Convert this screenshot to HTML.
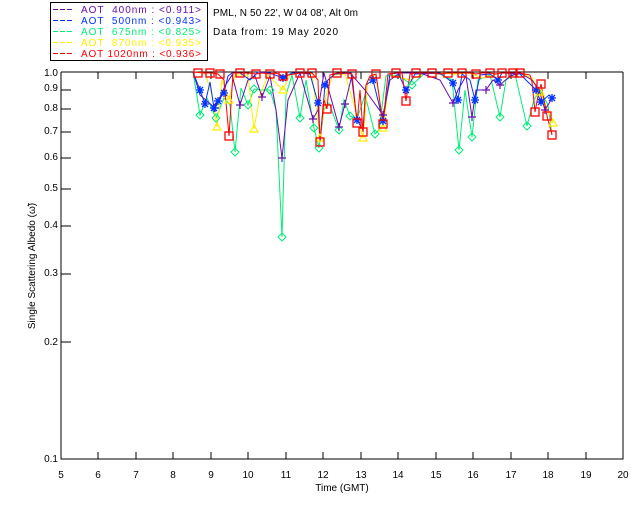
<!DOCTYPE html>
<html><head><style>
body{margin:0;background:#fff;width:640px;height:512px;overflow:hidden;font-family:"Liberation Sans",sans-serif}
svg text{font-family:"Liberation Sans",sans-serif;font-size:10px}
</style></head><body>
<svg width="640" height="512" xmlns="http://www.w3.org/2000/svg">
<defs>
<g id="sq"><rect x="-4" y="-4" width="8" height="8" fill="none" stroke="#f00" stroke-width="1.3"/></g>
<g id="ast"><path d="M-4 0H4M0-4V4M-3-3L3 3M-3 3L3-3" stroke="#0033ff" stroke-width="1.3"/></g>
<g id="cr"><path d="M-4 0H4M0-4V4" stroke="#6a0dad" stroke-width="1.2"/></g>
<g id="dm"><path d="M0-4L4 0L0 4L-4 0Z" fill="none" stroke="#00ee77" stroke-width="1"/></g>
<g id="tr"><path d="M0-4L4 3H-4Z" fill="none" stroke="#ffee00" stroke-width="1.2"/></g>
</defs>
<!-- legend -->
<rect x="50.5" y="2.5" width="157" height="58" fill="#fff" stroke="#000"/>
<g stroke-width="1">
<path d="M53 9.5h20" stroke="#6a0dad" stroke-dasharray="5,2"/>
<path d="M53 20.5h20" stroke="#0033ff" stroke-dasharray="5,2"/>
<path d="M53 31.5h20" stroke="#00ee77" stroke-dasharray="5,2"/>
<path d="M53 42.5h20" stroke="#ffee00" stroke-dasharray="5,2"/>
<path d="M53 53.5h20" stroke="#f00" stroke-dasharray="5,2"/>
</g>
<g font-size="10.5">
<text x="81" y="13" fill="#6a0dad" textLength="120" lengthAdjust="spacing">AOT&#160;&#160;400nm : &lt;0.911&gt;</text>
<text x="81" y="24" fill="#0033ff" textLength="120" lengthAdjust="spacing">AOT&#160;&#160;500nm : &lt;0.943&gt;</text>
<text x="81" y="35" fill="#00ee77" textLength="120" lengthAdjust="spacing">AOT&#160;&#160;675nm : &lt;0.825&gt;</text>
<text x="81" y="46" fill="#ffee00" textLength="120" lengthAdjust="spacing">AOT&#160;&#160;870nm : &lt;0.935&gt;</text>
<text x="81" y="57" fill="#f00" textLength="120" lengthAdjust="spacing">AOT 1020nm : &lt;0.936&gt;</text>
</g>
<text x="213" y="16" textLength="145" lengthAdjust="spacing">PML, N 50 22', W 04 08', Alt 0m</text>
<text x="213" y="35" textLength="125" lengthAdjust="spacing">Data from: 19 May 2020</text>
<!-- axes -->
<path d="M61 72V459H623V72M61 72H623" fill="none" stroke="#000"/>
<g stroke="#000">
<path d="M98 459v-7M136 459v-7M173 459v-7M211 459v-7M248 459v-7M286 459v-7M323 459v-7M361 459v-7M398 459v-7M436 459v-7M473 459v-7M511 459v-7M548 459v-7M586 459v-7"/>
<path d="M98 72v7M136 72v7M173 72v7M211 72v7M248 72v7M286 72v7M323 72v7M361 72v7M398 72v7M436 72v7M473 72v7M511 72v7M548 72v7M586 72v7"/>
<path d="M61 90h10M61 109h10M61 132h10M61 158h10M61 189h10M61 226h10M61 274h10M61 342h10"/>
</g>
<g text-anchor="end">
<text x="58" y="76">1.0</text><text x="58" y="91">0.9</text><text x="58" y="111">0.8</text><text x="58" y="134">0.7</text><text x="58" y="160">0.6</text><text x="58" y="191">0.5</text><text x="58" y="228">0.4</text><text x="58" y="276">0.3</text><text x="58" y="345">0.2</text><text x="58" y="462">0.1</text>
</g>
<g text-anchor="middle">
<text x="61" y="478">5</text><text x="98" y="478">6</text><text x="136" y="478">7</text><text x="173" y="478">8</text><text x="211" y="478">9</text><text x="248" y="478">10</text><text x="286" y="478">11</text><text x="323" y="478">12</text><text x="361" y="478">13</text><text x="398" y="478">14</text><text x="436" y="478">15</text><text x="473" y="478">16</text><text x="511" y="478">17</text><text x="548" y="478">18</text><text x="586" y="478">19</text><text x="623" y="478">20</text>
<text x="342" y="491">Time (GMT)</text>
<text transform="translate(35,266) rotate(-90)">Single Scattering Albedo (ω̃)</text>
</g>
<!-- series -->
<polyline fill="none" stroke="#00ee77" points="193,72 200,115 207,98 216,118 224,98 230,105 235,152 241,88 248,105 254,89 262,90 270,90 276,110 282,237 286,95 292,75 300,118 306,80 314,128 319,148 324,110 329,103 339,130 344,100 350,116 357,119 365,95 375,134 379,130 386,76 398,75 412,85 425,73 440,74 452,80 459,150 465,90 472,137 478,80 490,75 500,117 506,80 515,74 527,126 534,100 540,90 548,105 552,135"/>
<polyline fill="none" stroke="#ffee00" points="193,72 205,73 212,95 217,127 222,80 229,100 235,75 248,75 254,129 260,95 268,75 283,90 290,74 300,73 312,74 320,138 326,95 333,75 345,74 357,115 363,138 368,80 376,75 383,128 390,75 410,80 425,73 440,73 455,74 470,73 482,78 500,73 520,73 532,78 540,92 548,110 553,123"/>
<polyline fill="none" stroke="#6a0dad" points="193,72 200,95 215,108 225,86 232,75 240,105 248,80 255,76 262,97 270,76 276,110 282,158 288,100 300,73 313,119 318,110 324,73 339,127 345,104 352,75 365,90 383,115 390,80 400,73 420,73 440,80 453,103 458,90 466,76 472,117 476,90 486,90 493,80 500,85 510,76 520,73 532,80 539,90 545,110 551,100"/>
<polyline fill="none" stroke="#0033ff" points="193,72 200,90 205,104 210,82 214,108 218,101 224,93 228,76 232,73 240,73 250,80 258,72 270,73 283,78 292,73 300,73 310,74 318,103 320,142 325,85 328,80 335,74 351,73 357,120 363,130 366,85 373,80 383,121 390,74 398,73 406,90 415,74 440,73 453,83 458,100 462,74 470,80 475,100 480,75 490,74 498,80 502,73 520,74 536,90 541,102 549,95 552,98"/>
<polyline fill="none" stroke="#f00" points="193,72 205,73 212,73 218,74 224,80 229,136 233,73 240,73 248,73 256,74 262,73 270,74 276,73 283,76 300,73 312,73 318,80 320,142 324,100 327,109 330,75 337,73 345,73 352,74 357,123 360,90 363,132 366,85 370,76 376,74 383,124 388,74 396,73 402,73 406,101 410,74 416,73 425,73 432,73 440,74 448,73 455,73 462,73 470,73 476,74 482,73 490,73 496,74 502,73 507,73 513,73 520,73 530,75 532,82 535,112 538,96 541,84 547,116 552,135"/>
<g>
<use href="#dm" x="200" y="115"/><use href="#dm" x="216" y="118"/><use href="#dm" x="235" y="152"/><use href="#dm" x="248" y="105"/><use href="#dm" x="254" y="89"/><use href="#dm" x="270" y="90"/><use href="#dm" x="282" y="237"/><use href="#dm" x="300" y="118"/><use href="#dm" x="314" y="128"/><use href="#dm" x="319" y="148"/><use href="#dm" x="339" y="130"/><use href="#dm" x="350" y="116"/><use href="#dm" x="375" y="134"/><use href="#dm" x="459" y="150"/><use href="#dm" x="472" y="137"/><use href="#dm" x="500" y="117"/><use href="#dm" x="527" y="126"/><use href="#dm" x="412" y="85"/>
<use href="#tr" x="217" y="127"/><use href="#tr" x="254" y="129"/><use href="#tr" x="283" y="90"/><use href="#tr" x="320" y="138"/><use href="#tr" x="363" y="138"/><use href="#tr" x="383" y="128"/><use href="#tr" x="553" y="123"/><use href="#tr" x="540" y="92"/><use href="#tr" x="229" y="100"/>
<use href="#cr" x="215" y="108"/><use href="#cr" x="240" y="105"/><use href="#cr" x="262" y="97"/><use href="#cr" x="282" y="158"/><use href="#cr" x="313" y="119"/><use href="#cr" x="339" y="127"/><use href="#cr" x="345" y="104"/><use href="#cr" x="383" y="115"/><use href="#cr" x="453" y="103"/><use href="#cr" x="472" y="117"/><use href="#cr" x="500" y="85"/><use href="#cr" x="545" y="110"/><use href="#cr" x="486" y="90"/>
<use href="#ast" x="200" y="90"/><use href="#ast" x="205" y="104"/><use href="#ast" x="214" y="108"/><use href="#ast" x="218" y="101"/><use href="#ast" x="224" y="93"/><use href="#ast" x="283" y="78"/><use href="#ast" x="318" y="103"/><use href="#ast" x="325" y="85"/><use href="#ast" x="357" y="120"/><use href="#ast" x="373" y="80"/><use href="#ast" x="383" y="121"/><use href="#ast" x="406" y="90"/><use href="#ast" x="453" y="83"/><use href="#ast" x="458" y="100"/><use href="#ast" x="475" y="100"/><use href="#ast" x="498" y="80"/><use href="#ast" x="536" y="90"/><use href="#ast" x="541" y="102"/><use href="#ast" x="552" y="98"/>
<use href="#sq" x="198" y="73"/><use href="#sq" x="210" y="73"/><use href="#sq" x="220" y="74"/><use href="#sq" x="229" y="136"/><use href="#sq" x="240" y="73"/><use href="#sq" x="256" y="74"/><use href="#sq" x="270" y="74"/><use href="#sq" x="283" y="76"/><use href="#sq" x="300" y="73"/><use href="#sq" x="312" y="73"/><use href="#sq" x="320" y="142"/><use href="#sq" x="327" y="109"/><use href="#sq" x="337" y="73"/><use href="#sq" x="352" y="74"/><use href="#sq" x="357" y="123"/><use href="#sq" x="363" y="132"/><use href="#sq" x="376" y="74"/><use href="#sq" x="383" y="124"/><use href="#sq" x="396" y="73"/><use href="#sq" x="406" y="101"/><use href="#sq" x="416" y="73"/><use href="#sq" x="432" y="73"/><use href="#sq" x="448" y="73"/><use href="#sq" x="462" y="73"/><use href="#sq" x="476" y="74"/><use href="#sq" x="490" y="73"/><use href="#sq" x="502" y="73"/><use href="#sq" x="513" y="73"/><use href="#sq" x="520" y="73"/><use href="#sq" x="535" y="112"/><use href="#sq" x="541" y="84"/><use href="#sq" x="547" y="116"/><use href="#sq" x="552" y="135"/>
</g>
</svg>
</body></html>
